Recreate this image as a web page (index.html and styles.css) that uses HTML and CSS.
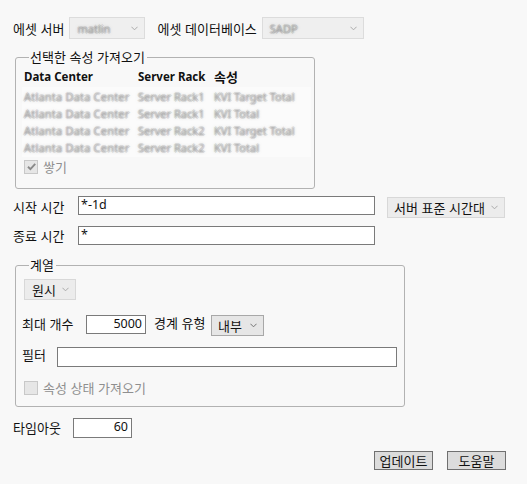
FILE: index.html
```html
<!DOCTYPE html>
<html lang="ko">
<head>
<meta charset="utf-8">
<link rel="stylesheet" href="styles.css">
</head>
<body>
<div class="page">
  <div class="row row-top">
    <span class="lbl">에셋 서버</span>
    <div class="select dis w-server"><span class="blur">matlin</span><svg class="chev" viewBox="0 0 8 5"><path d="M0.5 0.5 L4 4 L7.5 0.5" /></svg></div>
    <span class="lbl lbl-db">에셋 데이터베이스</span>
    <div class="select dis w-db"><span class="blur">SADP</span><svg class="chev" viewBox="0 0 8 5"><path d="M0.5 0.5 L4 4 L7.5 0.5" /></svg></div>
  </div>

  <fieldset class="group g1">
    <legend>선택한 속성 가져오기</legend>
    <div class="attr-head">
      <span class="c1">Data Center</span><span class="c2">Server Rack</span><span class="c3">속성</span>
    </div>
    <div class="attr-list">
      <div class="attr-row"><span class="c1">Atlanta Data Center</span><span class="c2">Server Rack1</span><span class="c3">KVI Target Total</span></div>
      <div class="attr-row"><span class="c1">Atlanta Data Center</span><span class="c2">Server Rack1</span><span class="c3">KVI Total</span></div>
      <div class="attr-row"><span class="c1">Atlanta Data Center</span><span class="c2">Server Rack2</span><span class="c3">KVI Target Total</span></div>
      <div class="attr-row"><span class="c1">Atlanta Data Center</span><span class="c2">Server Rack2</span><span class="c3">KVI Total</span></div>
    </div>
    <div class="check dis stack">
      <span class="box"><svg viewBox="0 0 10 10"><path d="M1.8 5.2 L4 7.4 L8.4 2.6" /></svg></span>
      <span>쌓기</span>
    </div>
  </fieldset>

  <div class="row row-time">
    <span class="lbl lbl-time">시작 시간</span>
    <div class="input w-time">*-1d</div>
    <div class="select tz">서버 표준 시간대<svg class="chev" viewBox="0 0 8 5"><path d="M0.5 0.5 L4 4 L7.5 0.5" /></svg></div>
  </div>
  <div class="row row-time2">
    <span class="lbl lbl-time">종료 시간</span>
    <div class="input w-time">*</div>
  </div>

  <fieldset class="group g2">
    <legend>계열</legend>
    <div class="select raw">원시<svg class="chev" viewBox="0 0 8 5"><path d="M0.5 0.5 L4 4 L7.5 0.5" /></svg></div>
    <div class="row row-max">
      <span class="lbl lbl-max">최대 개수</span>
      <div class="input num w-max">5000</div>
      <span class="lbl lbl-bound">경계 유형</span>
      <div class="select bound">내부<svg class="chev" viewBox="0 0 8 5"><path d="M0.5 0.5 L4 4 L7.5 0.5" /></svg></div>
    </div>
    <div class="row row-filter">
      <span class="lbl lbl-filter">필터</span>
      <div class="input w-filter"></div>
    </div>
    <div class="check dis status">
      <span class="box"></span>
      <span>속성 상태 가져오기</span>
    </div>
  </fieldset>

  <div class="row row-timeout">
    <span class="lbl lbl-timeout">타임아웃</span>
    <div class="input num w-timeout">60</div>
  </div>

  <div class="buttons">
    <button class="btn">업데이트</button>
    <button class="btn">도움말</button>
  </div>
</div>
</body>
</html>
```

FILE: styles.css
```css
html, body {
  margin: 0;
  padding: 0;
  background: #f8f8f8;
}
body {
  font-family: "Noto Sans CJK KR", "Noto Sans", sans-serif;
  font-size: 13px;
  color: #111;
  width: 527px;
  height: 484px;
  overflow: hidden;
}
.page {
  padding: 17px 0 0 13px;
}
.row {
  display: flex;
  align-items: center;
}
.lbl {
  line-height: 15px;
  white-space: nowrap;
}
.row-top {
  height: 22px;
}
.row-top .lbl {
  margin-right: 5px;
}
.lbl-db {
  margin-left: 12px;
}

.select {
  box-sizing: border-box;
  display: flex;
  align-items: center;
  justify-content: space-between;
  border: 1px solid #d4d4d4;
  background: #ececec;
  padding: 0 6px 0 7px;
  line-height: 15px;
  white-space: nowrap;
}
.select .chev {
  width: 7px;
  height: 5px;
  flex: none;
}
.select .chev path {
  fill: none;
  stroke: #a8a8a8;
  stroke-width: 1.1;
}
.select.dis {
  background: #efefef;
  border-color: #dcdcdc;
  height: 22px;
}
.w-server { width: 76px; }
.w-db { width: 102px; }
.blur {
  color: transparent;
  text-shadow: 0 0 3px rgba(140, 140, 140, 0.6),
    1px 0 rgba(150, 150, 150, 0.3), -1px 0 rgba(150, 150, 150, 0.3),
    0 1px rgba(150, 150, 150, 0.3), 0 -1px rgba(150, 150, 150, 0.3);
  font-family: "Noto Sans", sans-serif;
  font-size: 11px;
}

.group {
  box-sizing: border-box;
  margin: 0;
  border: 1px solid #b2b2b2;
  border-radius: 3px;
  padding: 0;
}
.group legend {
  padding: 0 2px 0 1px;
  margin-left: 5px;
  line-height: 14px;
}
.g1 {
  width: 300px;
  height: 139px;
  margin: 11px 0 0 2px;
  padding: 6px 0 0 8px;
}
.attr-head {
  display: flex;
  font-family: "Noto Sans", sans-serif;
  font-weight: bold;
  font-size: 11.5px;
  line-height: 14px;
  color: #111;
}
.attr-head .c3 {
  font-family: "Noto Sans CJK KR", sans-serif;
  font-size: 13px;
}
.c1 { width: 114px; flex: none; }
.c2 { width: 76px; flex: none; }
.c3 { flex: none; }
.attr-list {
  margin: 3px 3px 0 -2px;
  padding: 1px 0 1px 2px;
  background: #fbfbfb;
}
.attr-row {
  display: flex;
  height: 17px;
  align-items: center;
  font-family: "Noto Sans", sans-serif;
  font-size: 11px;
  color: transparent;
  text-shadow: 0 0 3px rgba(140, 140, 140, 0.6),
    1px 0 rgba(160, 160, 160, 0.3), -1px 0 rgba(160, 160, 160, 0.3),
    0 1px rgba(160, 160, 160, 0.3), 0 -1px rgba(160, 160, 160, 0.3);
}
.attr-row .c1 { letter-spacing: 0.2px; }

.check {
  display: flex;
  align-items: center;
  line-height: 15px;
}
.check .box {
  box-sizing: border-box;
  width: 14px;
  height: 14px;
  border: 1px solid #c8c8c8;
  background: #e6e6e6;
  margin-right: 5px;
  display: flex;
  align-items: center;
  justify-content: center;
}
.check .box svg {
  width: 11px;
  height: 11px;
}
.check .box path {
  fill: none;
  stroke: #8a8a8a;
  stroke-width: 1.7;
}
.check.dis {
  color: #8f8f8f;
}
.stack {
  margin-top: 2px;
}

.row-time {
  margin-top: 7px;
  height: 20px;
}
.row-time2 {
  margin-top: 10px;
  height: 19px;
}
.lbl-time {
  width: 65px;
  flex: none;
}
.input {
  box-sizing: border-box;
  background: #fff;
  border: 1px solid #7a7a7a;
  height: 19px;
  line-height: 15px;
  padding: 0 3px 0 2px;
  font-family: "Noto Sans", sans-serif;
  font-size: 12.5px;
  white-space: nowrap;
}
.input.num {
  text-align: right;
}
.w-time {
  width: 297px;
  height: 19px;
  align-self: flex-start;
}
.tz {
  width: 118px;
  height: 21px;
  margin-left: 12px;
  margin-top: 1px;
  align-self: flex-start;
  background: #ececec;
  border-color: #d8d8d8;
  padding-left: 6px;
}

.g2 {
  width: 390px;
  height: 149px;
  margin: 13px 0 0 2px;
  padding: 7px 0 0 8px;
}
.raw {
  width: 52px;
  height: 21px;
  margin-left: 0;
  background: #ececec;
  border-color: #d8d8d8;
  padding-left: 7px;
}
.row-max {
  margin-top: 15px;
  height: 20px;
  align-items: flex-start;
}
.lbl-max {
  width: 64px;
  flex: none;
  margin-left: -2px;
  margin-top: 1px;
}
.w-max {
  width: 60px;
  height: 19px;
}
.lbl-bound {
  margin-left: 8px;
  margin-right: 5px;
  width: 52px;
  flex: none;
}
.bound {
  width: 53px;
  height: 21px;
  border-color: #a8a8a8;
  background: #e6e6e6;
  padding-left: 6px;
}
.bound .chev path {
  stroke: #707070;
}
.row-filter {
  margin-top: 12px;
  height: 20px;
  align-items: flex-start;
}
.lbl-filter {
  width: 35px;
  flex: none;
  margin-left: -2px;
  margin-top: 0;
}
.w-filter {
  width: 340px;
  height: 20px;
}
.status {
  margin-top: 13px;
}

.row-timeout {
  margin-top: 11px;
  height: 20px;
  align-items: flex-start;
}
.lbl-timeout {
  width: 60px;
  flex: none;
  margin-top: 2px;
}
.w-timeout {
  width: 59px;
  height: 20px;
}

.buttons {
  display: flex;
  justify-content: flex-end;
  gap: 14px;
  margin-top: 13px;
  padding-right: 21px;
}
.btn {
  box-sizing: border-box;
  width: 59px;
  height: 19px;
  padding: 0;
  margin: 0;
  border: 1px solid #707070;
  background: #dcdcdc;
  font-family: "Noto Sans CJK KR", sans-serif;
  font-size: 13px;
  line-height: 15px;
  color: #111;
  border-radius: 0;
}
```
